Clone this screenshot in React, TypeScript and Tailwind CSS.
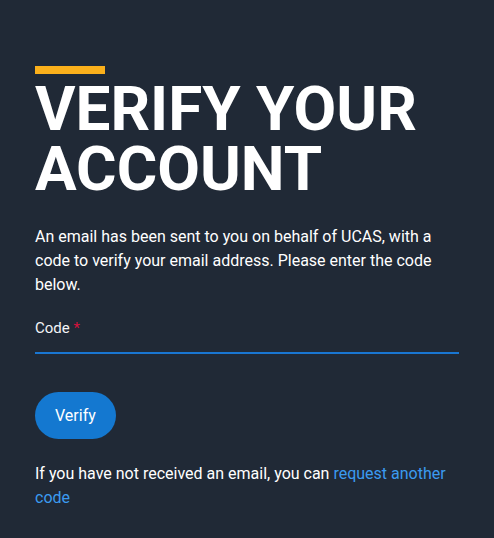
import React, { useState } from 'react';

const App: React.FC = () => {
  const [code, setCode] = useState('');

  return (
    <div className="min-h-[538px] bg-[#202936] px-[35px] pt-[66px] pb-8 font-['Roboto','Liberation_Sans',sans-serif] text-white">
      <div className="h-2 w-[70px] bg-[#fbb01b]" />
      <h1 className="mt-[5px] text-[62px] font-bold uppercase leading-[60px]">
        Verify your account
      </h1>
      <p className="mt-[26px] text-base leading-6">
        An email has been sent to you on behalf of UCAS, with a code to verify your email address. Please enter the code below.
      </p>

      <label className="mt-[19px] block">
        <span className="text-[15px] leading-6 text-gray-100">
          Code <span className="text-[#d6113d]">*</span>
        </span>
        <input
          value={code}
          onChange={e => setCode(e.target.value)}
          className="block h-[14px] w-full border-b-2 border-[#1976d2] bg-transparent text-base outline-none"
        />
      </label>

      <button className="mt-[38px] h-[47px] rounded-full bg-[#1478d0] px-5 text-base text-white">
        Verify
      </button>

      <p className="mt-[23px] text-base leading-6">
        If you have not received an email, you can{' '}
        <a href="#" className="text-[#3b9bf0]">request another code</a>
      </p>
    </div>
  );
};

export default App;
